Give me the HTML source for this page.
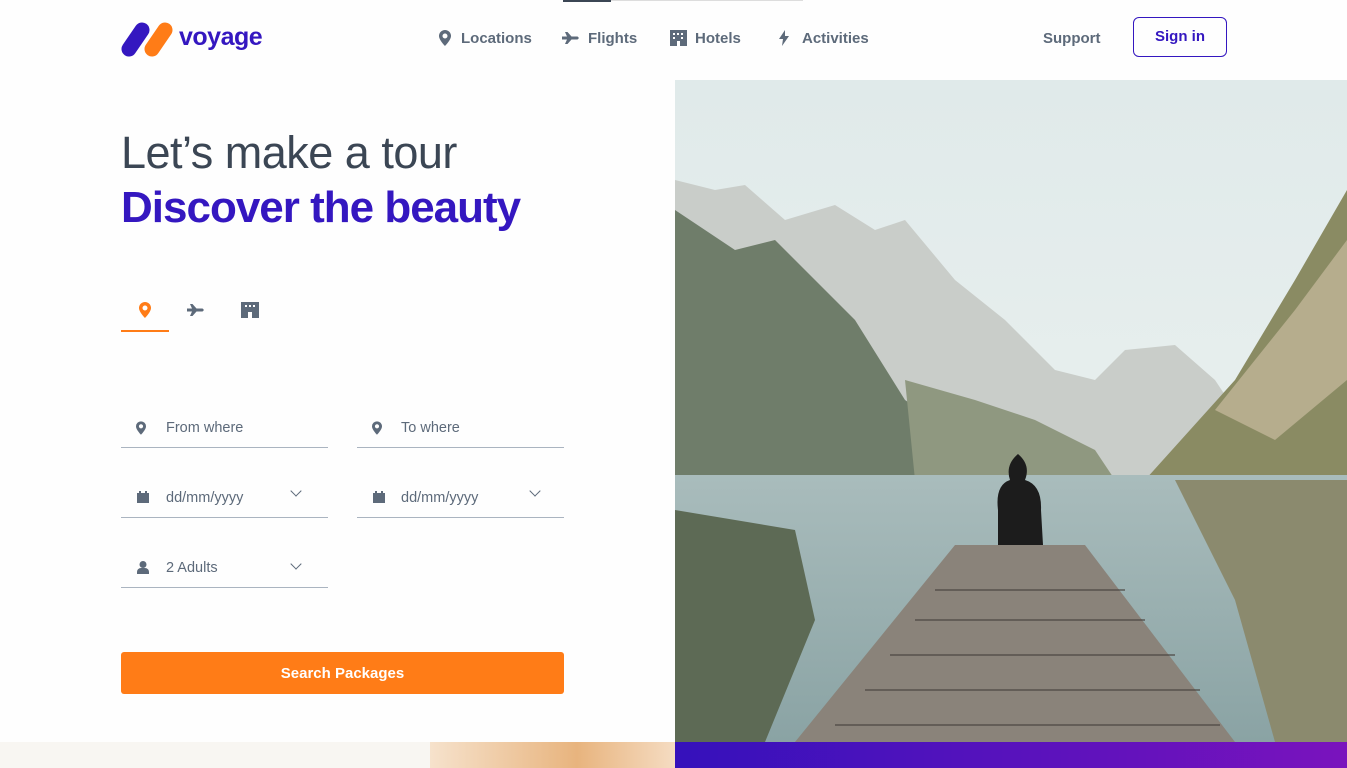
<!DOCTYPE html>
<html><head><meta charset="utf-8"><style>
*{margin:0;padding:0;box-sizing:border-box}
body{width:1347px;height:768px;overflow:hidden;background:#fefefe;font-family:"Liberation Sans",sans-serif;position:relative}
.abs{position:absolute}
svg{overflow:visible}
.nav{font-size:15px;font-weight:bold;color:#5d6a7a;display:flex;align-items:center;gap:8px;height:20px}
.field{position:absolute;width:207px;height:1px;background:#aab4c0}
.lbl{position:absolute;font-size:14.5px;color:#5d6a7a}
.chev{position:absolute;width:8px;height:8px;border-right:1.5px solid #5d6a7a;border-bottom:1.5px solid #5d6a7a;transform:rotate(45deg)}
</style></head><body>
<div class="abs" style="left:563px;top:0;width:48px;height:2px;background:#3b4654"></div>
<div class="abs" style="left:611px;top:0;width:192px;height:1px;background:#ddd"></div>
<svg class="abs" style="left:121px;top:23px" width="52" height="33"><line x1="21" y1="7" x2="8" y2="26" stroke="#3417c0" stroke-width="15" stroke-linecap="round"/><line x1="44" y1="7" x2="31" y2="26" stroke="#ff7c17" stroke-width="15" stroke-linecap="round"/></svg>
<div class="abs" style="left:179px;top:23px;font-size:25px;font-weight:bold;color:#3417c0;letter-spacing:-0.5px">voyage</div>
<div class="abs nav" style="left:439px;top:28px"><svg width="12" height="16" viewBox="0 0 12 16"><path d="M6 0a6 6 0 0 0-6 6c0 4 6 10 6 10s6-6 6-10a6 6 0 0 0-6-6zm0 8.5a2.5 2.5 0 1 1 0-5 2.5 2.5 0 0 1 0 5z" fill="#5d6a7a"/></svg><span style="margin-left:2px">Locations</span></div>
<div class="abs nav" style="left:562px;top:28px"><svg width="18" height="16" viewBox="0 0 18 16"><path d="M0 6.5h5L3 2h2.5l4 4.5h6q2.5 1.5 0 3h-6L5.5 14H3l2-4.5H0z" fill="#5d6a7a"/></svg>Flights</div>
<div class="abs nav" style="left:670px;top:28px"><svg width="17" height="16"><rect x="0" y="0" width="17" height="16" fill="#5d6a7a"/><rect x="3" y="3" width="2" height="2" fill="#fff"/><rect x="7" y="3" width="2" height="2" fill="#fff"/><rect x="11" y="3" width="2" height="2" fill="#fff"/><rect x="3" y="7" width="2" height="2" fill="#fff"/><rect x="11" y="7" width="2" height="2" fill="#fff"/><rect x="7" y="11" width="3" height="5" fill="#fff"/></svg>Hotels</div>
<div class="abs nav" style="left:778px;top:28px"><svg width="12" height="16" viewBox="0 0 12 16"><path d="M7 0L1 9h4l-1 7 7-10H7z" fill="#5d6a7a"/></svg><span style="margin-left:4px">Activities</span></div>
<div class="abs nav" style="left:1043px;top:28px">Support</div>
<div class="abs" style="left:1133px;top:17px;width:94px;height:40px;border:1px solid #3417c0;border-radius:6px;color:#3417c0;font-size:15px;font-weight:bold;text-align:center;line-height:38px">Sign in</div>

<div class="abs" style="left:121px;top:127px;font-size:45px;color:#3b4654;letter-spacing:-0.5px">Let’s make a tour</div>
<div class="abs" style="left:121px;top:183px;font-size:44px;font-weight:bold;color:#3417c0;letter-spacing:-1px">Discover the beauty</div>

<svg class="abs" style="left:139px;top:302px" width="12" height="16" viewBox="0 0 12 16"><path d="M6 0a6 6 0 0 0-6 6c0 4 6 10 6 10s6-6 6-10a6 6 0 0 0-6-6zm0 8.5a2.5 2.5 0 1 1 0-5 2.5 2.5 0 0 1 0 5z" fill="#ff7c17"/></svg>
<svg class="abs" style="left:187px;top:302px" width="18" height="16" viewBox="0 0 18 16"><path d="M0 6.5h5L3 2h2.5l4 4.5h6q2.5 1.5 0 3h-6L5.5 14H3l2-4.5H0z" fill="#5d6a7a"/></svg>
<svg class="abs" style="left:241px;top:302px" width="18" height="16"><rect width="18" height="16" fill="#5d6a7a"/><rect x="4" y="3" width="2" height="2" fill="#fff"/><rect x="8" y="3" width="2" height="2" fill="#fff"/><rect x="12" y="3" width="2" height="2" fill="#fff"/><rect x="7" y="10" width="4" height="6" fill="#fff"/></svg>
<div class="abs" style="left:121px;top:330px;width:48px;height:2px;background:#ff7c17"></div>

<svg class="abs" style="left:136px;top:421px" width="10" height="14" viewBox="0 0 12 16"><path d="M6 0a6 6 0 0 0-6 6c0 4 6 10 6 10s6-6 6-10a6 6 0 0 0-6-6zm0 8.5a2.5 2.5 0 1 1 0-5 2.5 2.5 0 0 1 0 5z" fill="#5d6a7a"/></svg>
<div class="lbl" style="left:166px;top:420px">From where</div>
<div class="field" style="left:121px;top:447px"></div>
<svg class="abs" style="left:372px;top:421px" width="10" height="14" viewBox="0 0 12 16"><path d="M6 0a6 6 0 0 0-6 6c0 4 6 10 6 10s6-6 6-10a6 6 0 0 0-6-6zm0 8.5a2.5 2.5 0 1 1 0-5 2.5 2.5 0 0 1 0 5z" fill="#5d6a7a"/></svg>
<div class="lbl" style="left:401px;top:420px">To where</div>
<div class="field" style="left:357px;top:447px"></div>

<svg class="abs" style="left:137px;top:491px" width="12" height="12"><rect y="2" width="12" height="10" fill="#5d6a7a"/><rect x="2" y="0" width="2" height="3" fill="#5d6a7a"/><rect x="8" y="0" width="2" height="3" fill="#5d6a7a"/></svg>
<div class="lbl" style="left:166px;top:490px">dd/mm/yyyy</div>
<div class="chev" style="left:292px;top:487px"></div>
<div class="field" style="left:121px;top:517px"></div>
<svg class="abs" style="left:373px;top:491px" width="12" height="12"><rect y="2" width="12" height="10" fill="#5d6a7a"/><rect x="2" y="0" width="2" height="3" fill="#5d6a7a"/><rect x="8" y="0" width="2" height="3" fill="#5d6a7a"/></svg>
<div class="lbl" style="left:401px;top:490px">dd/mm/yyyy</div>
<div class="chev" style="left:531px;top:487px"></div>
<div class="field" style="left:357px;top:517px"></div>

<svg class="abs" style="left:137px;top:561px" width="12" height="13"><circle cx="6" cy="3.5" r="3.5" fill="#5d6a7a"/><path d="M0 13v-2a4 4 0 0 1 4-4h4a4 4 0 0 1 4 4v2z" fill="#5d6a7a"/></svg>
<div class="lbl" style="left:166px;top:560px">2 Adults</div>
<div class="chev" style="left:292px;top:560px"></div>
<div class="field" style="left:121px;top:587px"></div>

<div class="abs" style="left:121px;top:652px;width:443px;height:42px;background:#ff7c17;border-radius:3px;color:#fff;font-weight:bold;font-size:15px;text-align:center;line-height:44px">Search Packages</div>

<svg class="abs" style="left:675px;top:80px;overflow:hidden" width="672" height="662" viewBox="0 0 672 662">
<defs><linearGradient id="sky" x1="0" y1="0" x2="0" y2="1"><stop offset="0" stop-color="#e0eaea"/><stop offset="1" stop-color="#eef3f1"/></linearGradient>
<linearGradient id="wat" x1="0" y1="0" x2="0" y2="1"><stop offset="0" stop-color="#a9bcbc"/><stop offset="1" stop-color="#8aa3a4"/></linearGradient></defs>
<rect width="672" height="662" fill="url(#sky)"/>
<path d="M0 100 L40 110 L70 105 L110 140 L160 125 L200 150 L230 140 L280 200 L330 240 L380 290 L420 300 L450 270 L500 265 L540 300 L560 330 L500 400 L0 400Z" fill="#c9cdc9"/>
<path d="M0 130 L60 170 L100 160 L180 240 L230 320 L320 380 L340 400 L0 400Z" fill="#6f7d6a"/>
<path d="M230 300 L300 320 L360 340 L420 370 L440 400 L240 400Z" fill="#8f9880"/>
<path d="M470 400 L560 300 L620 200 L672 110 L672 400Z" fill="#8a8b63"/>
<path d="M540 330 L620 230 L672 160 L672 300 L600 360Z" fill="#b6ad8d"/>
<rect y="395" width="672" height="267" fill="url(#wat)"/>
<path d="M0 430 L120 450 L140 540 L90 662 L0 662Z" fill="#5d6a55"/>
<path d="M500 400 L672 400 L672 662 L600 662 L560 520Z" fill="#8b8a6e"/>
<path d="M280 465 L410 465 L560 662 L120 662Z" fill="#8a837a"/>
<g stroke="#4a4540" stroke-width="2" opacity=".6"><line x1="260" y1="510" x2="450" y2="510"/><line x1="240" y1="540" x2="470" y2="540"/><line x1="215" y1="575" x2="500" y2="575"/><line x1="190" y1="610" x2="525" y2="610"/><line x1="160" y1="645" x2="545" y2="645"/></g>
<path d="M323 465 L323 430 Q320 405 335 400 Q330 385 343 374 Q356 385 350 400 Q367 405 366 430 L368 465Z" fill="#1c1c1c"/>
</svg>

<div class="abs" style="left:0;top:742px;width:430px;height:26px;background:#f8f6f2"></div>
<div class="abs" style="left:430px;top:742px;width:245px;height:26px;background:linear-gradient(90deg,#f6e2cc,#e8b47e 60%,#f5dcc2)"></div>
<div class="abs" style="left:675px;top:742px;width:672px;height:26px;background:linear-gradient(90deg,#3511bb,#7a13bd)"></div>
</body></html>
